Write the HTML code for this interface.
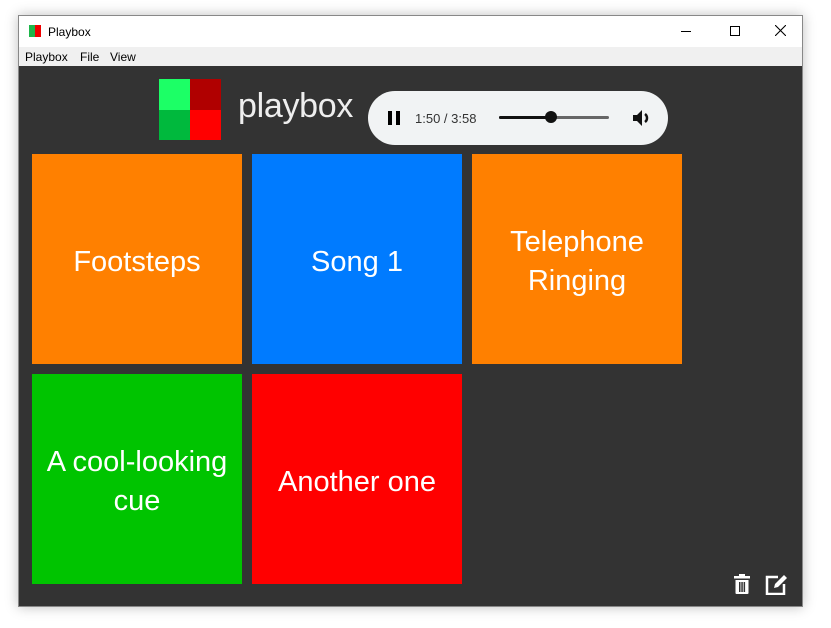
<!DOCTYPE html><html><head><style>
body{margin:0;width:831px;height:628px;background:#fff;position:relative;overflow:hidden;font-family:"Liberation Sans",sans-serif}
.win{position:absolute;left:18px;top:15px;width:785px;height:592px;border:1px solid #888;box-sizing:border-box;box-shadow:0 0 12px rgba(0,0,0,.25);background:#fff}
.title{position:absolute;left:0;top:0;width:100%;height:31px;background:#fff;font-size:12px}
.menu{position:absolute;left:0;top:31px;width:100%;height:20px;background:#f0f0f0;font-size:12px}
.menu span{position:absolute;top:3px}
.t{position:absolute;width:210px;height:210px;display:flex;align-items:center;justify-content:center;text-align:center;color:#fff;font-size:29px;line-height:39px;padding-top:6px;box-sizing:border-box}
.a{position:absolute}
</style></head><body>
<div class="win">
<div class="title">
<div class="a" style="left:10px;top:9px;width:6px;height:12px;background:#1db64a"></div>
<div class="a" style="left:16px;top:9px;width:6px;height:12px;background:#e00"></div>
<span class="a" style="left:29px;top:9px">Playbox</span>
<div class="a" style="left:662px;top:15px;width:10px;height:1px;background:#000"></div>
<div class="a" style="left:711px;top:10px;width:8px;height:8px;border:1px solid #000"></div>
<svg class="a" style="left:756px;top:9px" width="11" height="11"><path d="M0 0L11 11M11 0L0 11" stroke="#000" stroke-width="1.1"/></svg>
</div>
<div class="menu"><span style="left:6px">Playbox</span><span style="left:61px">File</span><span style="left:91px">View</span></div>
</div>
<div class="a" style="left:19px;top:66px;width:783px;height:540px;background:#333"></div>
<div class="a" style="left:159px;top:79px;width:31px;height:31px;background:#1cff66"></div>
<div class="a" style="left:190px;top:79px;width:31px;height:31px;background:#b00000"></div>
<div class="a" style="left:159px;top:110px;width:31px;height:30px;background:#00b93d"></div>
<div class="a" style="left:190px;top:110px;width:31px;height:30px;background:#ff0000"></div>
<div class="a" style="left:238px;top:87px;color:#eee;font-size:34px;letter-spacing:-0.3px">playbox</div>
<div class="a" style="left:368px;top:91px;width:300px;height:54px;border-radius:27px;background:#f1f3f4"></div>
<div class="a" style="left:388px;top:111px;width:4px;height:14px;background:#000"></div>
<div class="a" style="left:396px;top:111px;width:4px;height:14px;background:#000"></div>
<div class="a" style="left:415px;top:111px;font-size:13px;color:#333">1:50 / 3:58</div>
<div class="a" style="left:499px;top:116px;width:110px;height:3px;background:#666;border-radius:2px"></div>
<div class="a" style="left:499px;top:116px;width:52px;height:3px;background:#111;border-radius:2px"></div>
<div class="a" style="left:545px;top:111px;width:12px;height:12px;background:#111;border-radius:50%"></div>
<svg class="a" style="left:632px;top:109px" width="20" height="18" viewBox="0 0 20 18"><path d="M1 6h4l5-5v16l-5-5H1z" fill="#111"/><path d="M13 5a5 5 0 0 1 0 8" stroke="#111" stroke-width="2.5" fill="none"/></svg>
<div class="t" style="left:32px;top:154px;background:#ff8000">Footsteps</div>
<div class="t" style="left:252px;top:154px;background:#007bff">Song 1</div>
<div class="t" style="left:472px;top:154px;background:#ff8000">Telephone<br>Ringing</div>
<div class="t" style="left:32px;top:374px;background:#00c400">A cool-looking<br>cue</div>
<div class="t" style="left:252px;top:374px;background:#ff0000">Another one</div>
<svg class="a" style="left:733px;top:573px" width="18" height="22" viewBox="0 0 18 22"><rect x="1" y="3" width="16" height="2.5" fill="#fff"/><rect x="6" y="1" width="6" height="2" fill="#fff"/><path d="M2.5 7h13v13a1 1 0 0 1-1 1h-11a1 1 0 0 1-1-1z" fill="#fff"/><rect x="6" y="9" width="1.5" height="10" fill="#333"/><rect x="8.3" y="9" width="1.5" height="10" fill="#333"/><rect x="10.6" y="9" width="1.5" height="10" fill="#333"/></svg>
<svg class="a" style="left:765px;top:573px" width="24" height="22" viewBox="0 0 24 22"><path d="M13 4H2v17h17V11" stroke="#fff" stroke-width="2.5" fill="none"/><path d="M9 15l1-4 9-9 3 3-9 9z" fill="#fff"/></svg>
</body></html>
